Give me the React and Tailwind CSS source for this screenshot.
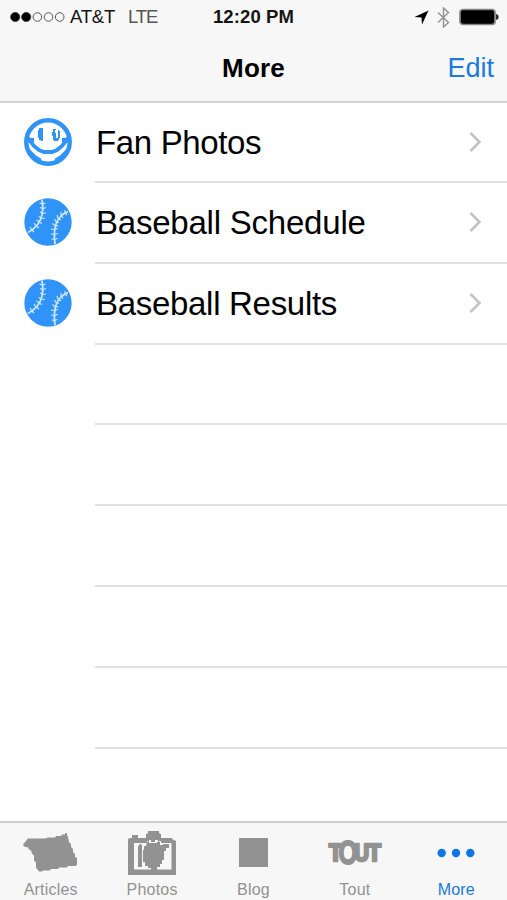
import React from "react";

function FanIcon() {
  return (
    <svg width="48" height="48" viewBox="0 0 48 48" fill="none">
      <circle cx="24" cy="24" r="21.7" stroke="#3093f8" strokeWidth="4.500" />
      <path
        d="M15 10h4v13h-2v-1h-2v-2h-1v-8h1zM29 11h3v1h-1v3h1v5h2v-8h1v1h1v7h-1v2h-1v1h-4v-1h-1v-4h-1v-4h1z"
        fill="#3093f8"
      />
      <path
        d="M4 20l3 4 3 4 5 4 5 2h8l5-2 5-4 3-4 3-4M4 22h6M38 22h6"
        stroke="#3093f8"
        strokeWidth="3.8"
      />
      <path d="M5 32l6 6 6 3.500M43 32l-6 6-6 3.500" stroke="#3093f8" strokeWidth="2" />
    </svg>
  );
}

function BaseballIcon() {
  return (
    <svg width="48" height="48" viewBox="0 0 48 48" fill="none">
      <circle cx="24" cy="24" r="23.7" fill="#3093f8" />
      <g stroke="#cfe6ff">
        <path d="M18 1.500c2.500 14-1 26-14 33M44 13.500C33 18 28.500 28 31 46" strokeWidth="1.8" />
        <path
          strokeWidth="1.2"
          d="M15.500 5l3 1 3-1M16 9.500l3 1 3-1M16 14l3 1.500 3-.5M14.500 18.500l3 1.500 3.500.5M12.500 22l2.500 2 3 1.500M10 25l2 3 3 2M6 29l2 3 2 2M41 12v3l2 2M37 14v3l2 3M33 17l1 3 3 2M30.500 21l1.500 2.500 3 1M28.500 25.500l2 2 4 .5M27 31l3 .5 4-1M27 36l3 .5 4-1M27.500 41l3 .5 3-1"
        />
      </g>
    </svg>
  );
}

function ArticlesIcon() {
  return (
    <svg width="56" height="42" viewBox="0 0 56 42" fill="#929292">
      <path d="M0 12.500l5-6h17l3-1h7l1-1.500h5l1-1.500h3V1h2v2l1 2 1 5 2 2v3l2 2v3l2 2v3l2 1v7l-2 1h-7l-1 1.500h-8l-1 1.500h-7l-1 1.500h-7l-1 1h-3l-3-4v-5l-2-2v-5l-2-2-1-3-2-1-1-2-4-1z" />
    </svg>
  );
}

function PhotosIcon() {
  return (
    <svg width="50" height="46" viewBox="0 0 50 46" fill="#929292">
      <path fillRule="evenodd" d="M1 9l2-1h2V5h6v3h8V4l2-1V1h11v2l2 1v4h11v1l4 2v34H1zM7 13v26.500h37.500V13H34v-2h-2v2H21v-2h-1v2z" />
      <path d="M20 12h13v3h3v-1h6v4h-3v3h-2v9h-2v4h-2v3h-3v3h-6v-2h-3v-2h-3v-4h-2V20h1v-4h2zM12 15l1-1h1l1 1v22h-4V16h1z" />
      <path d="M22 10h2v2h4v-2h3v2h-1v1h-8z" fill="#f7f7f7" />
    </svg>
  );
}

function ToutIcon() {
  return (
    <svg
      width="58"
      height="34"
      viewBox="0 0 58 34"
      fill="#929292"
      stroke="#929292"
      strokeWidth="2.6"
      strokeLinejoin="round"
      fontFamily="Liberation Sans, sans-serif"
      fontWeight="700"
    >
      <text x="3" y="25" fontSize="23" textLength="13" lengthAdjust="spacingAndGlyphs">T</text>
      <text x="12.5" y="27.500" fontSize="33" strokeWidth="1.8" textLength="19" lengthAdjust="spacingAndGlyphs">O</text>
      <text x="28.5" y="25" fontSize="23" textLength="14.5" lengthAdjust="spacingAndGlyphs">U</text>
      <text x="42" y="25" fontSize="23" textLength="13" lengthAdjust="spacingAndGlyphs">T</text>
    </svg>
  );
}

function MoreIcon() {
  return (
    <svg width="38" height="10" viewBox="0 0 38 10" fill="#0f75e6">
      <circle cx="4.700" cy="5" r="4.200" />
      <circle cx="19" cy="5" r="4.200" />
      <circle cx="33.300" cy="5" r="4.200" />
    </svg>
  );
}

const rows = [
  { label: "Fan Photos", icon: FanIcon, tracking: "tracking-[-0.35px]" },
  { label: "Baseball Schedule", icon: BaseballIcon, tracking: "tracking-[-0.22px]" },
  { label: "Baseball Results", icon: BaseballIcon, tracking: "tracking-[-0.3px]" },
];

const tabs = [
  { label: "Articles", icon: ArticlesIcon },
  { label: "Photos", icon: PhotosIcon },
  { label: "Blog", icon: () => <div className="h-[29px] w-[29px] bg-[#929292]" /> },
  { label: "Tout", icon: ToutIcon },
  { label: "More", icon: MoreIcon, active: true },
];

function StatusBar() {
  return (
    <div className="grid h-[34px] grid-cols-[1fr_auto_1fr] items-center px-[10px] text-[18px] leading-[34px]">
      <div className="flex items-center">
        <svg width="56" height="12" viewBox="0 0 56 12" fill="none" stroke="#444" strokeWidth="0.9">
          <circle cx="5.200" cy="6" r="4.600" fill="#000" />
          <circle cx="16.200" cy="6" r="4.600" fill="#000" />
          <circle cx="27.400" cy="6" r="4.300" />
          <circle cx="38.500" cy="6" r="4.300" />
          <circle cx="49.700" cy="6" r="4.300" />
        </svg>
        <span className="ml-[4px] text-[18.5px] tracking-[-0.2px] text-[#151515]">AT&amp;T</span>
        <span className="ml-[13px] text-[18.5px] tracking-[-1.2px] text-[#555]">LTE</span>
      </div>
      <span className="text-[18.5px] font-bold tracking-[0.1px] text-[#151515]">12:20 PM</span>
      <div className="flex items-center justify-end">
        <svg width="15" height="15" viewBox="0 0 15 15">
          <path d="M14.500.5L8 14.500 7.500 7.500.5 7z" fill="#000" />
        </svg>
        <svg className="ml-[8px]" width="13" height="21" viewBox="0 0 13 21" fill="none" stroke="#929292" strokeWidth="1.4">
          <path d="M1 5.500l10.500 10L6.500 20V1l5 4.500L1 15.500" />
        </svg>
        <svg className="-mr-[2px] ml-[9px]" width="40" height="18" viewBox="0 0 40 18">
          <rect x="1" y="1.500" width="35" height="15" rx="3" fill="#000" stroke="#858585" strokeWidth="1.700" />
          <path d="M37.500 6.500l1.500 1v3l-1.500 1z" fill="#000" stroke="#333" />
        </svg>
      </div>
    </div>
  );
}

export default function App() {
  return (
    <div className="flex h-[900px] w-[507px] flex-col overflow-hidden bg-white font-['Liberation_Sans',sans-serif] text-black">
      <header className="h-[103px] shrink-0 border-b-2 border-[#d2d2d2] bg-[#f7f7f7]">
        <StatusBar />
        <div className="grid h-[67px] grid-cols-3 items-center pt-px pr-[13px] pl-[13px] text-[27px]">
          <span />
          <h1 className="text-center text-[26px] font-bold tracking-[0.2px]">More</h1>
          <button className="text-right text-[#2079dc]">Edit</button>
        </div>
      </header>

      <main className="flex-1 overflow-hidden">
        {rows.map(({ label, icon: Icon, tracking }) => (
          <div key={label} className="flex h-[80.8px] items-center pl-[24px] first:h-[80px]">
            <div className="pb-[3px]">
              <Icon />
            </div>
            <div className="ml-[23px] flex h-full flex-1 items-center justify-between border-b-2 border-[#e1e1e2] pr-[25px] pl-px">
              <span className={"text-[33px] leading-none " + tracking}>{label}</span>
              <svg width="13" height="22" viewBox="0 0 13 22" fill="none" stroke="#c3c3c6" strokeWidth="2.500">
                <path d="M1.500 2l9 9-9 9" />
              </svg>
            </div>
          </div>
        ))}
        {[0, 1, 2, 3, 4].map((i) => (
          <div key={i} className="ml-[95px] h-[80.8px] border-b-2 border-[#e1e1e2]" />
        ))}
      </main>

      <nav className="grid h-[79px] shrink-0 grid-cols-5 border-t-2 border-[#cecece] bg-[#f7f7f7]">
        {tabs.map(({ label, icon: Icon, active }) => (
          <div
            key={label}
            className={active ? "flex flex-col items-center text-[#2079dc]" : "flex flex-col items-center text-[#929292]"}
          >
            <div className="flex h-[59px] items-center justify-center">
              <Icon />
            </div>
            <span className="text-[16px] leading-[16px] tracking-[0.2px]">{label}</span>
          </div>
        ))}
      </nav>
    </div>
  );
}
